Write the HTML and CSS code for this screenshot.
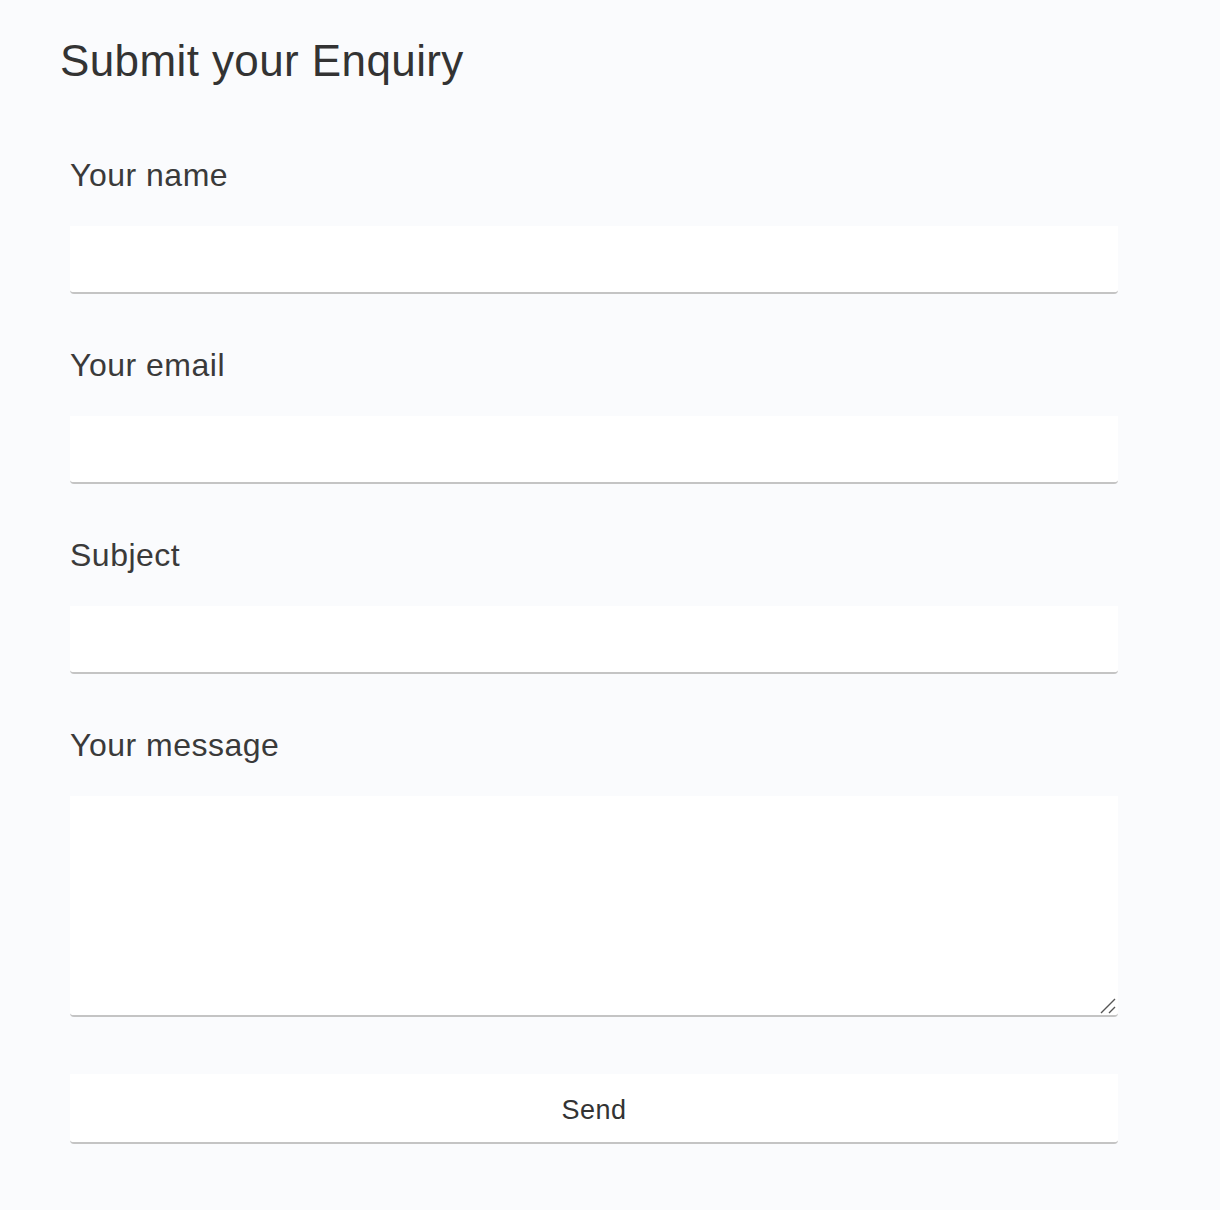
FILE: index.html
```html
<!DOCTYPE html>
<html>
  <head>
    <title>Submit your Enquiry</title>
    <link rel="stylesheet" href="styles.css">
  </head>
  <body>

    <div class="page">
      <h1>Submit your Enquiry</h1>

      <form class="enquiry">
        <div class="field">
          <label for="name">Your name</label>
          <input id="name" type="text" />
        </div>
        <div class="field">
          <label for="email">Your email</label>
          <input id="email" type="email" />
        </div>
        <div class="field">
          <label for="subject">Subject</label>
          <input id="subject" type="text" />
        </div>
        <div class="field">
          <label for="message">Your message</label>
          <div class="message-box">
            <textarea id="message"></textarea>
            <svg class="grip" width="18" height="18" viewBox="0 0 18 18">
              <path d="M2 16 L16 2 M10 16 L16 10" stroke="#555555" stroke-width="1.4" fill="none" />
            </svg>
          </div>
        </div>
        <div class="send">
          <button type="button">Send</button>
        </div>
      </form>
    </div>

  </body>
</html>
```

FILE: styles.css
```css
body {
  background-color: #fafbfd;
  color: #333333;
  margin: 0;
  font-family: "Liberation Sans", Arial, sans-serif;
}

.page {
  padding: 35px 0 0 60px;
}

h1 {
  font-size: 44px;
  font-weight: normal;
  line-height: 1.2;
  letter-spacing: 0.4px;
  margin: 0;
  color: #333333;
}

.enquiry {
  width: 1048px;
  margin: 68px 0 0 10px;
}

.field {
  display: flex;
  flex-direction: column;
  margin-bottom: 52px;
}

.field label {
  font-size: 32px;
  line-height: 38px;
  letter-spacing: 0.5px;
  color: #3a3a3a;
  margin-bottom: 32px;
}

.field input,
.field textarea {
  box-sizing: border-box;
  width: 100%;
  height: 68px;
  background-color: #ffffff;
  border: none;
  border-bottom: 2px solid #c4c4c4;
  border-radius: 0 0 4px 4px;
  font-family: inherit;
  font-size: 27px;
  padding: 0 12px;
  outline: none;
}

.message-box {
  position: relative;
}

.field textarea {
  height: 221px;
  padding: 12px;
  margin: 0;
  display: block;
  resize: none;
}

.grip {
  position: absolute;
  right: 1px;
  bottom: 2px;
  pointer-events: none;
}

.send {
  margin-top: 57px;
}

.send button {
  box-sizing: border-box;
  width: 100%;
  height: 70px;
  background-color: #ffffff;
  border: none;
  border-bottom: 2px solid #c4c4c4;
  border-radius: 0 0 4px 4px;
  font-family: inherit;
  font-size: 27px;
  letter-spacing: 0.5px;
  color: #333333;
  padding: 5px 0 0;
}
```
